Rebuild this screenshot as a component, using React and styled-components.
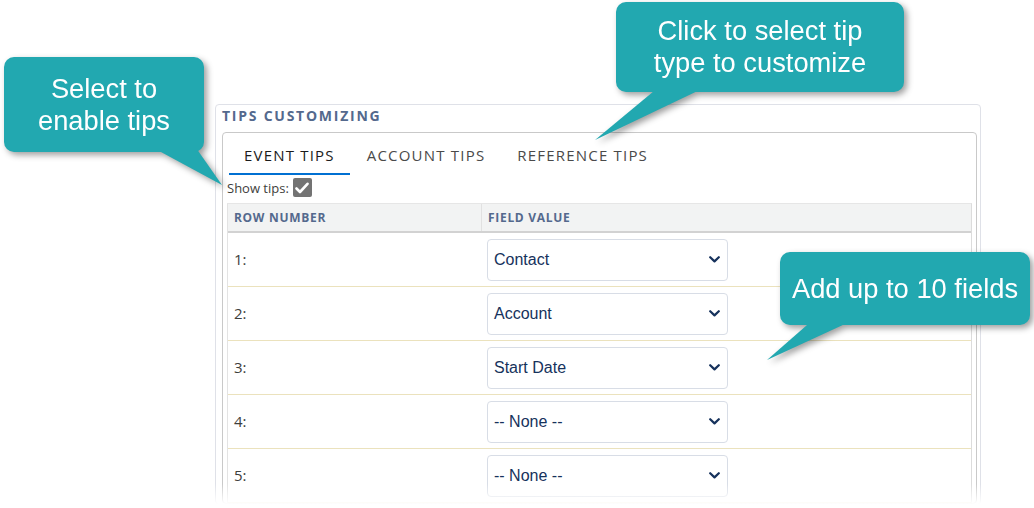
import React from 'react';
import styled, {createGlobalStyle} from 'styled-components';

const GlobalStyle = createGlobalStyle`
  html, body {
    margin: 0;
    background: #fff;
  }
  * {
    box-sizing: border-box;
  }
`;

const UI_FONT = `"Open Sans", "Liberation Sans", sans-serif`;
const TEAL = '#22a8b0';

const Page = styled.div`
  position: relative;
  width: 1034px;
  height: 508px;
  overflow: hidden;
  padding: 104px 0 0 215px;
  font-family: ${UI_FONT};
`;

const Card = styled.section`
  width: 766px;
  border: 1px solid #dfe1e8;
  border-radius: 4px;
  padding: 0 3px 0 6px;
`;

const CardTitle = styled.h2`
  margin: 0;
  height: 27px;
  padding-top: 1px;
  line-height: 19px;
  font-size: 14px;
  font-weight: 700;
  letter-spacing: 1.75px;
  color: #54698d;
`;

const Inner = styled.div`
  border: 1px solid #c9c9c9;
  border-radius: 4px;
  padding: 0 4px;
`;

const Tabs = styled.div`
  display: flex;
  gap: 2px;
  margin-left: 2px;
`;

const Tab = styled.div`
  height: 42px;
  padding: 4px 15px 0;
  display: flex;
  align-items: center;
  font-size: 15px;
  letter-spacing: 1.2px;
  color: ${(props) => (props.$active ? '#1b1b1b' : '#4a4a4a')};
  border-bottom: 2px solid ${(props) => (props.$active ? '#0070d2' : 'transparent')};
`;

const ShowRow = styled.label`
  display: flex;
  align-items: center;
  gap: 4px;
  height: 21px;
  margin: 2px 0 5px 0;
  font-size: 13px;
  color: #3e3e3c;
`;

const Checkbox = styled.span`
  width: 19px;
  height: 19px;
  border-radius: 2px;
  background: #737373;
  display: inline-flex;
  align-items: center;
  justify-content: center;
`;

const Table = styled.div`
  border-top: 1px solid #e6e6e6;
  border-left: 1px solid #e3e3e3;
  border-right: 1px solid #dcdcdc;
`;

const HeadRow = styled.div`
  display: grid;
  grid-template-columns: 254px 1fr;
  height: 29px;
  background: #f2f3f3;
  border-bottom: 2px solid #d2d2d2;
`;

const HeadCell = styled.div`
  display: flex;
  align-items: center;
  padding-left: 6px;
  border-right: ${(props) => (props.$first ? '1px solid #e1e1e1' : 'none')};
  font-size: 12px;
  font-weight: 700;
  letter-spacing: 0.7px;
  color: #54698d;
`;

const Row = styled.div`
  display: grid;
  grid-template-columns: 254px 1fr;
  height: 54px;
  border-bottom: 1px solid #ebe2bd;
`;

const NumCell = styled.div`
  display: flex;
  align-items: center;
  padding: 0 0 1px 6px;
  font-size: 15px;
  color: #3e3e3c;
`;

const ValueCell = styled.div`
  display: flex;
  align-items: center;
  padding-left: 5px;
`;

const Select = styled.div`
  width: 241px;
  height: 42px;
  border: 1px solid #d8dde6;
  border-radius: 4px;
  padding: 0 7px 0 6px;
  display: flex;
  align-items: center;
  justify-content: space-between;
  font-family: "Liberation Sans", Arial, sans-serif;
  font-size: 16px;
  color: #16325c;
  background: #fff;
`;

const Fade = styled.div`
  position: absolute;
  left: 0;
  right: 0;
  bottom: 0;
  height: 24px;
  background: linear-gradient(rgba(255, 255, 255, 0), #fff 85%);
  z-index: 1;
`;

const CalloutWrap = styled.div`
  position: absolute;
  z-index: 2;
  filter: drop-shadow(3px 3px 3px rgba(0, 0, 0, 0.38));
`;

const Bubble = styled.div`
  position: relative;
  width: 100%;
  height: 100%;
  border-radius: 10px;
  background: ${TEAL};
  display: flex;
  align-items: center;
  justify-content: center;
  text-align: center;
  font-family: "Liberation Sans", Arial, sans-serif;
  font-size: 27.3px;
  line-height: 32px;
  color: #fff;
`;

const Tail = styled.svg`
  position: absolute;
  left: 0;
  top: 0;
  overflow: visible;
`;

function Callout({box, tail, children}) {
  const [left, top, width, height] = box;
  return (
    <CalloutWrap style={{left, top, width, height}}>
      <Tail width={width} height={height}>
        <polygon points={tail} fill={TEAL}/>
      </Tail>
      <Bubble>{children}</Bubble>
    </CalloutWrap>
  );
}

function Chevron() {
  return (
    <svg width="11" height="7" viewBox="0 0 11 7">
      <path d="M1.2 1.2 L5.5 5.4 L9.8 1.2" fill="none" stroke="#16325c" strokeWidth="2.2"
            strokeLinecap="round" strokeLinejoin="round"/>
    </svg>
  );
}

const rows = ['Contact', 'Account', 'Start Date', '-- None --', '-- None --'];

export default function App() {
  return (
    <Page>
      <GlobalStyle/>
      <Card>
        <CardTitle>TIPS CUSTOMIZING</CardTitle>
        <Inner>
          <Tabs>
            <Tab $active>EVENT TIPS</Tab>
            <Tab>ACCOUNT TIPS</Tab>
            <Tab>REFERENCE TIPS</Tab>
          </Tabs>
          <ShowRow>
            Show tips:
            <Checkbox>
              <svg width="14" height="12" viewBox="0 0 14 12">
                <path d="M1.5 6.5 L5 10 L12.5 1.8" fill="none" stroke="#fff" strokeWidth="2.6"
                      strokeLinecap="round" strokeLinejoin="round"/>
              </svg>
            </Checkbox>
          </ShowRow>
          <Table>
            <HeadRow>
              <HeadCell $first>ROW NUMBER</HeadCell>
              <HeadCell>FIELD VALUE</HeadCell>
            </HeadRow>
            {rows.map((value, i) => (
              <Row key={i}>
                <NumCell>{i + 1}:</NumCell>
                <ValueCell>
                  <Select>
                    <span>{value}</span>
                    <Chevron/>
                  </Select>
                </ValueCell>
              </Row>
            ))}
          </Table>
        </Inner>
      </Card>
      <Fade/>

      <Callout box={[4, 57, 200, 95]} tail="144,88 190,88 218,128">
        Select to<br/>enable tips
      </Callout>
      <Callout box={[616, 2, 288, 90]} tail="44,84 92,84 -21,138">
        Click to select tip<br/>type to customize
      </Callout>
      <Callout box={[780, 252, 250, 73]} tail="35,66 78,66 -13,108">
        Add up to 10 fields
      </Callout>
    </Page>
  );
}
